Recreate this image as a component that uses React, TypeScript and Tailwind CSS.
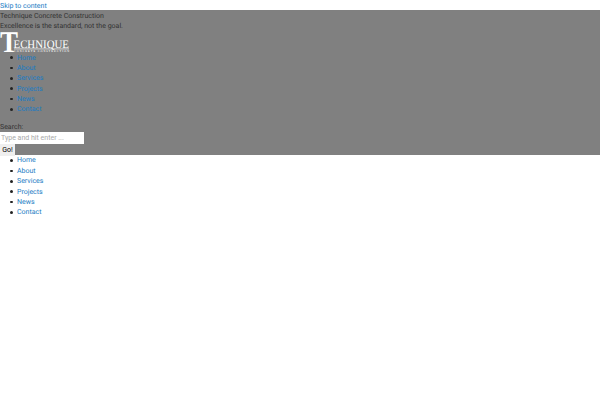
import React from 'react';

const links = ['Home', 'About', 'Services', 'Projects', 'News', 'Contact'];

const NavList: React.FC = () => (
  <ul className="pl-[10px] pt-[0.5px]">
    {links.map((label) => (
      <li key={label} className="flex h-[10.35px] items-center gap-[4.5px]">
        <span className="size-[2.5px] rounded-full bg-[#222]" />
        <a href="#" className="text-[#1a7cc4]">{label}</a>
      </li>
    ))}
  </ul>
);

const Logo: React.FC = () => (
  <svg width="70" height="21" viewBox="0 0 70 21" className="block overflow-visible" fill="#fff" fontFamily="'Liberation Serif', serif">
    <text x="0" y="20.5" fontSize="30" fontWeight="700" textLength="18" lengthAdjust="spacingAndGlyphs">T</text>
    <text x="13.5" y="16.5" fontSize="11.5" textLength="55.5" lengthAdjust="spacingAndGlyphs">ECHNIQUE</text>
    <rect x="14" y="17.6" width="55" height="0.7" />
    <text x="14" y="20.8" fontSize="2.6" fontWeight="700" textLength="55" lengthAdjust="spacing">CONCRETE CONSTRUCTION</text>
  </svg>
);

export default function App() {
  return (
    <div className="h-[400px] w-[600px] overflow-hidden bg-white font-['Roboto',sans-serif] text-[7px] leading-[10.35px] text-[#333] [text-rendering:geometricPrecision]">
      <a href="#" className="block h-[10.35px] pt-[0.5px] text-[#1a7cc4]">Skip to content</a>
      <header className="h-[144.65px] bg-[#808080]">
        <p className="h-[10.35px] pt-[0.5px]">Technique Concrete Construction</p>
        <p className="h-[10.35px] pt-[0.5px]">Excellence is the standard, not the goal.</p>
        <Logo />
        <NavList />
        <form className="mt-[6.5px]">
          <label className="block h-[11px] pt-[0.5px]">Search:</label>
          <input
            placeholder="Type and hit enter ..."
            className="block h-[12px] w-[84px] bg-white px-[1px] text-[7px] outline-none placeholder:text-[#a9a9a9]"
          />
          <button type="button" className="block h-[11.6px] w-[15px] bg-[#efefef] text-center text-[7px] text-black">Go!</button>
        </form>
      </header>
      <NavList />
    </div>
  );
}
